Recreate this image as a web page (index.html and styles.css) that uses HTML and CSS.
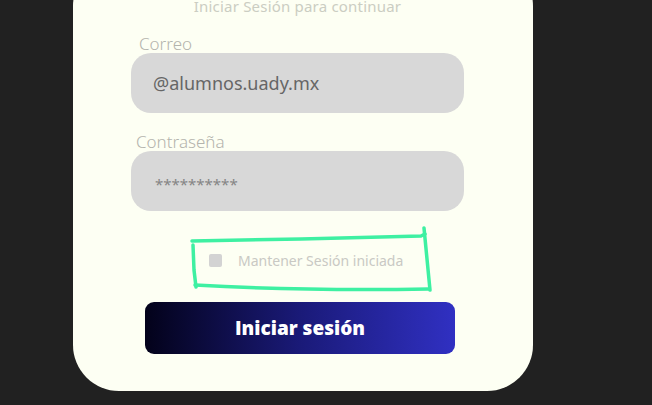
FILE: index.html
```html
<!DOCTYPE html>
<html lang="es">
<head>
<meta charset="utf-8">
<title>Iniciar Sesión</title>
<link rel="stylesheet" href="styles.css">
</head>
<body>
<div class="page">
  <div class="card">
    <p class="subtitle">Iniciar Sesión para continuar</p>
    <label class="label label-mail">Correo</label>
    <div class="input"><span class="value">@alumnos.uady.mx</span></div>
    <label class="label label-pass">Contraseña</label>
    <div class="input"><span class="value pass">**********</span></div>
    <div class="remember">
      <span class="check"></span>
      <span class="remember-text">Mantener Sesión iniciada</span>
      <svg class="scribble" viewBox="0 0 244 68" width="244" height="68">
        <path d="M3 16 L112 14 L232 11 L236 9" />
        <path d="M235 3 Q238 35 241 65" />
        <path d="M4 20 L5 45 L7 62" />
        <path d="M6 60 Q110 66 240 64" />
      </svg>
    </div>
    <button class="btn">Iniciar sesión</button>
  </div>
</div>
</body>
</html>
```
FILE: styles.css
```css
* { box-sizing: border-box; }
html, body { margin: 0; padding: 0; }
body {
  background: #212121;
  font-family: "Noto Sans", "Open Sans", sans-serif;
  width: 652px;
  height: 405px;
  overflow: hidden;
}
.page {
  padding-left: 73px;
}
.card {
  width: 460px;
  margin-top: -40px;
  background: #fdfff3;
  border-radius: 46px;
  padding: 36px 0 37px 58px;
  display: flex;
  flex-direction: column;
  align-items: flex-start;
}
.subtitle {
  margin: 0;
  width: 333px;
  text-align: center;
  font-size: 15px;
  line-height: 20px;
  color: #cbcdc2;
  letter-spacing: 0.2px;
}
.label {
  font-size: 17px;
  line-height: 18px;
  color: #b4b4ad;
  font-weight: 300;
}
.label-mail { margin: 19px 0 0 8px; }
.label-pass { margin: 20px 0 0 5px; }
.input {
  width: 333px;
  height: 60px;
  background: #d8d8d8;
  border-radius: 20px;
  display: flex;
  align-items: center;
  padding-left: 22px;
}
.value {
  font-size: 18px;
  color: #666666;
}
.pass {
  font-size: 15px;
  color: #858585;
  padding: 6px 0 0 2px;
}
.remember {
  position: relative;
  margin: 16px 0 0 78px;
  height: 63px;
  width: 240px;
  display: flex;
  align-items: center;
  padding-top: 4px;
}
.check {
  width: 13px;
  height: 13px;
  background: #d3d3d3;
  border-radius: 2px;
  margin-right: 16px;
}
.remember-text {
  font-size: 14px;
  color: #c9c9c4;
}
.scribble {
  position: absolute;
  left: -20px;
  top: -2px;
  fill: none;
  stroke: #3ef0a2;
  stroke-width: 3.5;
  stroke-linecap: round;
  stroke-linejoin: round;
}
.btn {
  margin: 12px 0 0 14px;
  width: 310px;
  height: 52px;
  border: 0;
  border-radius: 9px;
  background: linear-gradient(90deg, #03021a 0%, #1a1a78 50%, #3030c2 100%);
  color: #ffffff;
  font-family: "Open Sans", "Noto Sans", sans-serif;
  font-weight: 800;
  font-size: 19px;
  padding: 0;
  cursor: pointer;
}
```
